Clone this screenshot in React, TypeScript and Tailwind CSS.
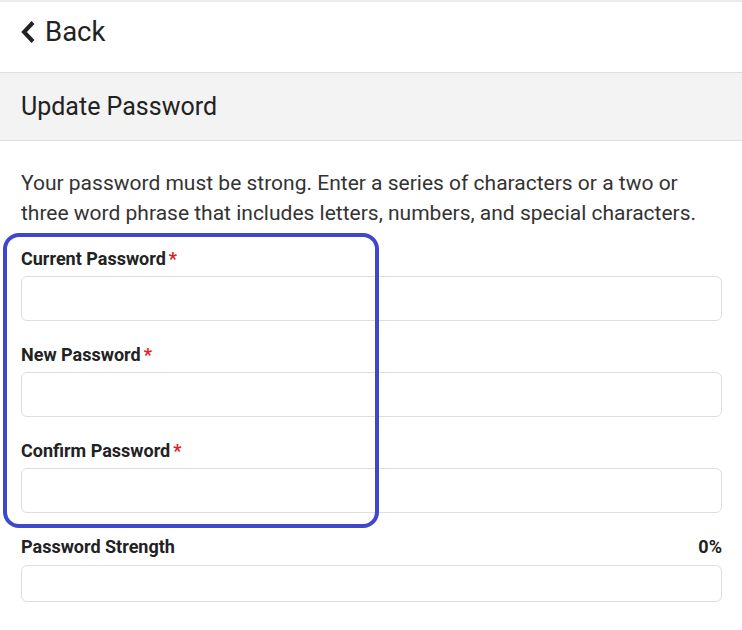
import React from 'react'

const fields = ['Current Password', 'New Password', 'Confirm Password']

export default function App() {
  return (
    <div className="relative min-h-screen bg-white text-[#222]" style={{ fontFamily: 'Roboto, "Liberation Sans", sans-serif' }}>
      {/* header */}
      <div className="h-[72px] border-t-2 border-[#ececec] flex items-center pl-[20px] pb-[10px]">
        <svg width="16" height="24" viewBox="0 0 16 24" className="mr-[9px]">
          <polyline points="13,2.5 4,12 13,21.5" fill="none" stroke="#222" strokeWidth="4" />
        </svg>
        <span className="text-[27.5px] leading-none">Back</span>
      </div>

      {/* title band */}
      <div className="h-[69px] bg-[#f3f3f3] border-y border-[#dedede] flex items-center pl-[21px]">
        <h1 className="text-[25px] text-[#222]">Update Password</h1>
      </div>

      <div className="px-[21px] pr-[20px]">
        <p className="mt-[27px] text-[21px] leading-[30px] text-[#333]">
          Your password must be strong. Enter a series of characters or a two or three word phrase that includes letters, numbers, and special characters.
        </p>

        <div className="mt-[19px]">
          {fields.map((f) => (
            <div key={f} className="mb-[22px]">
              <label className="block text-[18px] leading-[24px] font-bold text-[#222]">
                {f}
                <span className="text-[#e02020] ml-[3px]">*</span>
              </label>
              <input type="password" className="mt-[5px] block w-full h-[45px] border border-[#dedede] rounded-[6px] bg-white" />
            </div>
          ))}
          <div className="flex justify-between text-[18px] leading-[24px] font-bold text-[#222]">
            <span>Password Strength</span>
            <span>0%</span>
          </div>
          <div className="mt-[6px] h-[37px] border border-[#dedede] rounded-[6px]" />
        </div>
      </div>

      {/* annotation highlight */}
      <div className="absolute left-[3px] top-[233px] w-[376px] h-[295px] border-4 border-[#3f48cc] rounded-[16px] pointer-events-none" />
    </div>
  )
}
